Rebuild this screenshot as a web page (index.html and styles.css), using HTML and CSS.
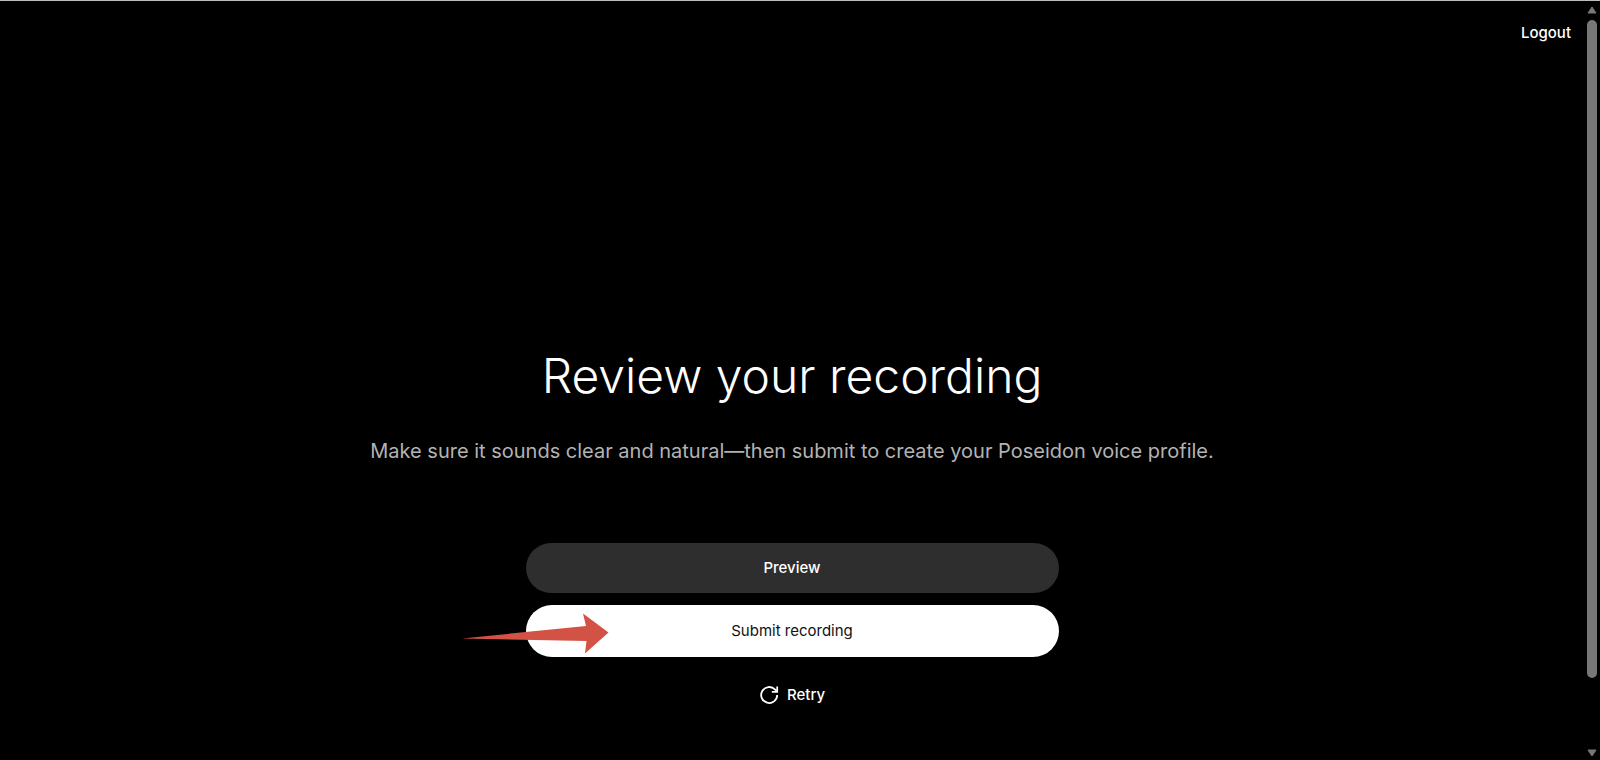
FILE: index.html
```html
<!DOCTYPE html>
<html lang="en">
<head>
<meta charset="UTF-8" />
<meta name="viewport" content="width=device-width, initial-scale=1" />
<title>Review your recording</title>
<link rel="stylesheet" href="styles.css">
</head>
<body>
  <div class="page">
    <header class="topbar">
      <button type="button" class="link-btn">Logout</button>
    </header>

    <main class="review">
      <h1>Review your recording</h1>
      <p class="subtitle">Make sure it sounds clear and natural—then submit to create your Poseidon voice profile.</p>

      <div class="actions">
        <button type="button" class="btn btn-dark">Preview</button>
        <div class="submit-wrap">
          <button type="button" class="btn btn-light">Submit recording</button>
          <svg class="pointer" width="148" height="42" viewBox="0 0 148 42" aria-hidden="true">
            <path d="M0 25.5L124 13L121 0.5L146.500 19.5L123 40.5L124.500 28Z" fill="#d25245" />
          </svg>
        </div>
        <button type="button" class="link-btn retry">
          <svg width="20" height="20" viewBox="0 0 20 20" fill="none" stroke="currentColor" stroke-width="1.8" aria-hidden="true">
            <path d="M18.200 10A8 8 0 1 1 15.900 4.400L17.800 6.300" />
            <path d="M18.200 1.500V6.800H12.800" />
          </svg>
          Retry
        </button>
      </div>
    </main>
  </div>

  <div class="scrollbar" aria-hidden="true">
    <svg width="10" height="8" viewBox="0 0 10 8"><path d="M5 1L9 7H1Z" /></svg>
    <div class="track"><div class="thumb"></div></div>
    <svg width="10" height="8" viewBox="0 0 10 8"><path d="M1 1H9L5 7Z" /></svg>
  </div>
</body>
</html>
```
FILE: styles.css
```css
/* Reset & base */
* {
  box-sizing: border-box;
}

body {
  margin: 0;
  min-height: 100vh;
  display: flex;
  background: #000;
  color: #fff;
  font-family: Inter, "Open Sans", sans-serif;
  border-top: 1px solid #b9bfbc;
}

h1, p {
  margin: 0;
}

button {
  border: none;
  font-family: inherit;
  font-size: 15px;
  line-height: 20px;
  cursor: pointer;
}

.page {
  flex: 1;
  display: flex;
  flex-direction: column;
}

/* Header */
.topbar {
  display: flex;
  justify-content: flex-end;
  padding: 22px 13px;
}

.link-btn {
  padding: 0;
  background: none;
  color: #fff;
  font-weight: 500;
}

/* Review screen */
.review {
  flex: 1;
  display: flex;
  flex-direction: column;
  align-items: center;
  justify-content: flex-end;
  padding: 0 24px 55px;
  text-align: center;
}

h1 {
  font-size: 48px;
  line-height: 64px;
  font-weight: 300;
}

.subtitle {
  margin-top: 27px;
  font-size: 20px;
  line-height: 32px;
  color: #b3b3b3;
}

.actions {
  width: 100%;
  max-width: 533px;
  margin-top: 76px;
  display: flex;
  flex-direction: column;
  align-items: center;
  gap: 12px;
}

.btn {
  display: block;
  width: 100%;
  padding: 15px 24px;
  border-radius: 26px;
}

.btn-dark {
  background: #2e2e2e;
  color: #fff;
  font-weight: 500;
}

.btn-light {
  padding: 16px 24px;
  background: #fff;
  color: #111;
}

.submit-wrap {
  position: relative;
  width: 100%;
}

/* Arrow drawn over the submit button */
.pointer {
  position: absolute;
  left: -64px;
  top: 8px;
}

.retry {
  display: flex;
  align-items: center;
  gap: 8px;
  margin-top: 16px;
}

/* Scrollbar */
.scrollbar {
  width: 16px;
  display: flex;
  flex-direction: column;
  align-items: center;
  gap: 6px;
  padding: 5px 0 3px;
}

.scrollbar svg {
  fill: #777;
  stroke: #777;
  stroke-linejoin: round;
}

.track {
  flex: 1;
}

.thumb {
  width: 10px;
  height: 91%;
  border-radius: 5px;
  background: #777;
}
```
